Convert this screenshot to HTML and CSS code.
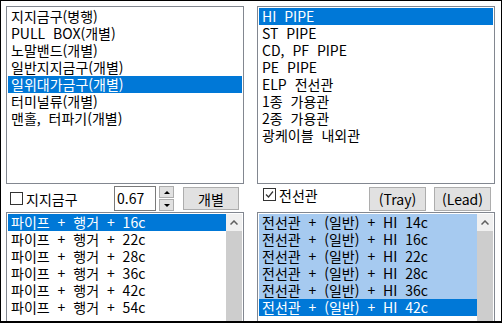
FILE: index.html
```html
<!DOCTYPE html>
<html lang="ko">
<head>
    <meta charset="UTF-8">
    <title>금구 선택</title>
    <link rel="stylesheet" href="styles.css">
</head>
<body>
    <div class="window">
        <!-- 지지금구 -->
        <div class="column">
            <ul class="listbox listbox-top">
                <li>지지금구(병행)</li>
                <li>PULL BOX(개별)</li>
                <li>노말밴드(개별)</li>
                <li>일반지지금구(개별)</li>
                <li class="selected">일위대가금구(개별)</li>
                <li>터미널류(개별)</li>
                <li>맨홀, 터파기(개별)</li>
            </ul>
            <div class="controls controls-left">
                <label class="check">
                    <span class="check-box"></span>
                    <span>지지금구</span>
                </label>
                <div class="num-input">0.67</div>
                <div class="spinner">
                    <span class="spin-btn"><span class="tri-up"></span></span>
                    <span class="spin-btn"><span class="tri-down"></span></span>
                </div>
                <button class="btn btn-single">개별</button>
            </div>
            <div class="listbox listbox-bottom">
                <ul class="rows">
                    <li class="selected">파이프 + 행거 + 16c</li>
                    <li>파이프 + 행거 + 22c</li>
                    <li>파이프 + 행거 + 28c</li>
                    <li>파이프 + 행거 + 36c</li>
                    <li>파이프 + 행거 + 42c</li>
                    <li>파이프 + 행거 + 54c</li>
                </ul>
                <div class="scrollbar">
                    <div class="scroll-up">
                        <svg width="8" height="5" viewBox="0 0 8 5"><path d="M0.5 4.5 L4 1 L7.5 4.5" fill="none" stroke="#606060" stroke-width="1.5"/></svg>
                    </div>
                    <div class="scroll-thumb"></div>
                </div>
            </div>
        </div>

        <!-- 전선관 -->
        <div class="column">
            <ul class="listbox listbox-top">
                <li class="selected">HI PIPE</li>
                <li>ST PIPE</li>
                <li>CD, PF PIPE</li>
                <li>PE PIPE</li>
                <li>ELP 전선관</li>
                <li>1종 가용관</li>
                <li>2종 가용관</li>
                <li>광케이블 내외관</li>
            </ul>
            <div class="controls controls-right">
                <label class="check">
                    <span class="check-box">
                        <svg width="11" height="11" viewBox="0 0 11 11"><path d="M2 5.5 L4.5 8 L9 2.5" fill="none" stroke="#333" stroke-width="1.2"/></svg>
                    </span>
                    <span>전선관</span>
                </label>
                <button class="btn btn-pair">(Tray)</button>
                <button class="btn btn-pair btn-last">(Lead)</button>
            </div>
            <div class="listbox listbox-bottom">
                <ul class="rows">
                    <li class="marked">전선관 + (일반) + HI 14c</li>
                    <li class="marked">전선관 + (일반) + HI 16c</li>
                    <li class="marked">전선관 + (일반) + HI 22c</li>
                    <li class="marked">전선관 + (일반) + HI 28c</li>
                    <li class="marked">전선관 + (일반) + HI 36c</li>
                    <li class="selected">전선관 + (일반) + HI 42c</li>
                </ul>
                <div class="scrollbar">
                    <div class="scroll-up">
                        <svg width="8" height="5" viewBox="0 0 8 5"><path d="M0.5 4.5 L4 1 L7.5 4.5" fill="none" stroke="#606060" stroke-width="1.5"/></svg>
                    </div>
                    <div class="scroll-thumb"></div>
                </div>
            </div>
        </div>
    </div>
</body>
</html>
```

FILE: styles.css
```css
/* General */
body {
    margin: 0;
    background: #fff;
    font-family: "Noto Sans CJK KR", "Noto Sans", sans-serif;
    font-size: 14px;
    color: #000;
}

.window {
    width: 502px;
    height: 323px;
    box-sizing: border-box;
    border: 1px solid #000;
    border-bottom-width: 2px;
    padding: 5px 6px 0 5px;
    display: grid;
    grid-template-columns: 238px 238px;
    column-gap: 13px;
    overflow: hidden;
}

.column {
    display: flex;
    flex-direction: column;
}

/* List boxes */
.listbox {
    box-sizing: border-box;
    border: 1px solid #828790;
    background: #fff;
    margin: 0;
}

.listbox-top {
    height: 178px;
    padding: 1px;
    list-style: none;
}

.listbox-bottom {
    height: 109px;
    border-bottom: none;
    padding: 1px 1px 0 1px;
    display: flex;
}

.rows {
    flex: 1;
    margin: 0;
    padding: 0;
    list-style: none;
}

li {
    height: 17px;
    line-height: 17px;
    padding-left: 3px;
    white-space: nowrap;
    word-spacing: 4px;
}

li.selected {
    background: #0078d7;
    color: #fff;
}

li.marked {
    background: #a6caf0;
}

.scrollbar {
    width: 16px;
    display: flex;
    flex-direction: column;
}

.scroll-up {
    height: 17px;
    background: #f0f0f0;
    display: flex;
    align-items: center;
    justify-content: center;
}

.scroll-thumb {
    flex: 1;
    background: #cdcdcd;
}

/* Controls row */
.controls {
    height: 28px;
    display: flex;
    align-items: flex-start;
}

.check {
    display: flex;
    align-items: center;
    gap: 3px;
    flex: 1;
    height: 13px;
}

.controls-left .check {
    margin: 8px 0 0 4px;
}

.controls-right .check {
    margin: 4px 0 0 6px;
}

.check-box {
    width: 13px;
    height: 13px;
    box-sizing: border-box;
    border: 1px solid #333;
    background: #fff;
    display: flex;
    align-items: center;
    justify-content: center;
}

.num-input {
    width: 42px;
    height: 25px;
    box-sizing: border-box;
    margin-top: 2px;
    border: 1px solid #7a7a7a;
    padding-left: 2px;
    line-height: 23px;
}

.spinner {
    width: 15px;
    height: 25px;
    margin: 2px 0 0 3px;
    display: flex;
    flex-direction: column;
    gap: 1px;
}

.spin-btn {
    flex: 1;
    box-sizing: border-box;
    background: #e1e1e1;
    border: 1px solid #adadad;
    display: flex;
    align-items: center;
    justify-content: center;
}

.tri-up {
    border-left: 3px solid transparent;
    border-right: 3px solid transparent;
    border-bottom: 3px solid #000;
}

.tri-down {
    border-left: 3px solid transparent;
    border-right: 3px solid transparent;
    border-top: 3px solid #000;
}

.btn {
    box-sizing: border-box;
    background: #e1e1e1;
    border: 1px solid #adadad;
    font-family: inherit;
    font-size: 14px;
    line-height: 1;
    color: #000;
    padding: 0;
    margin: 3px 0 0 0;
}

.btn-single {
    width: 56px;
    height: 23px;
    margin-left: 9px;
    margin-right: 5px;
}

.btn-pair {
    width: 57px;
    height: 24px;
}

.btn-last {
    margin-left: 8px;
    margin-right: 4px;
}
```
